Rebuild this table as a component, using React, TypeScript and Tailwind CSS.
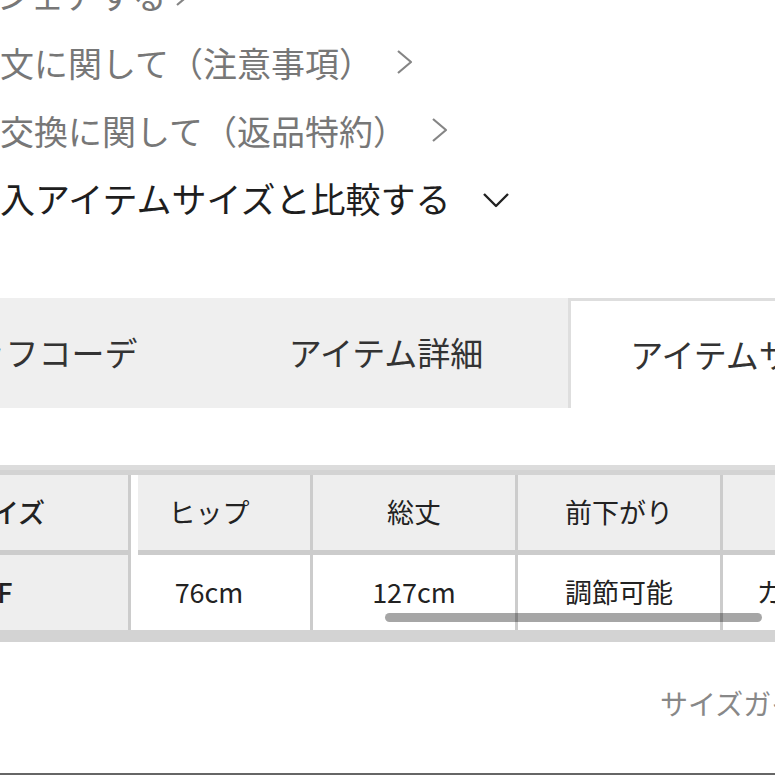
import React from "react";

const links = [
  { text: "アイテムをシェアする", shift: "-ml-[170px]", gap: "ml-[8px]" },
  { text: "ご注文に関して（注意事項）", shift: "-ml-[68px]", gap: "ml-[23px]" },
  { text: "返品・交換に関して（返品特約）", shift: "-ml-[102px]", gap: "ml-[24px]" },
];

const tabs = [
  { label: "スタッフコーデ", active: false },
  { label: "アイテム詳細", active: false },
  { label: "アイテムサイズ", active: true },
];

const columns = [
  { head: "ヒップ", value: "76cm" },
  { head: "総丈", value: "127cm" },
  { head: "前下がり", value: "調節可能" },
  { head: "素材", value: "カットソー" },
];

const ChevronRight = () => (
  <svg width="18" height="26" viewBox="0 0 18 26" fill="none">
    <path d="M2 2 L15 13 L2 24" stroke="#858585" strokeWidth="2.2" strokeLinejoin="round" />
  </svg>
);

const ChevronDown = () => (
  <svg width="28" height="17" viewBox="0 0 28 17" fill="none">
    <path d="M2 2 L14 14 L26 2" stroke="#222" strokeWidth="2.4" strokeLinejoin="round" />
  </svg>
);

export default function App() {
  return (
    <div className="w-[775px] h-[775px] overflow-hidden bg-white font-['Noto_Sans_CJK_JP','Noto_Sans',sans-serif]">
      {/* link list */}
      <div className="-mt-[40px]">
        {links.map((l) => (
          <div
            key={l.text}
            className={`flex items-center h-[68px] whitespace-nowrap text-[34px] text-[#777] ${l.shift}`}
          >
            <span>{l.text}</span>
            <span className={`flex items-center ${l.gap}`}>
              <ChevronRight />
            </span>
          </div>
        ))}
        <div className="flex items-center h-[68px] whitespace-nowrap text-[35px] text-[#1e1e1e] -ml-[35px]">
          <span>購入アイテムサイズと比較する</span>
          <span className="ml-[32px] flex items-center mt-[4px]">
            <ChevronDown />
          </span>
        </div>
      </div>

      {/* tabs */}
      <div className="mt-[66px] flex h-[110px] -ml-[160px]">
        {tabs.map((t) => (
          <div
            key={t.label}
            className={`w-[364px] shrink-0 flex items-center justify-center whitespace-nowrap text-[33px] text-[#333] ${
              t.active ? "bg-white border-t-[3px] border-l-[3px] border-[#dedede] pr-[16px]" : "bg-[#efefef]"
            }`}
          >
            {t.label}
          </div>
        ))}
      </div>

      {/* size table */}
      <div className="mt-[57px] relative h-[177px] overflow-hidden bg-[#d3d3d3] border-t-[5px] border-[#dcdcdc] pt-[5px] pb-[12px]">
        <div className="flex gap-[3px] ml-[108px] bg-[#cccccc] w-max">
          {columns.map((c) => (
            <div key={c.head} className="w-[202px] shrink-0 flex flex-col text-[27px] text-[#222]">
              <div className="h-[75px] bg-[#eeeeee] flex items-center justify-center whitespace-nowrap">
                {c.head}
              </div>
              <div className="h-[5px] bg-[#cccccc]" />
              <div className="h-[75px] bg-white flex items-center justify-center whitespace-nowrap">
                {c.value}
              </div>
            </div>
          ))}
        </div>

        {/* sticky first column */}
        <div className="absolute left-0 top-[5px] bottom-[12px] flex">
          <div className="w-[128px] flex flex-col bg-[#cccccc] text-[27px] text-[#222]">
            <div className="h-[75px] bg-[#eeeeee] overflow-hidden flex items-center">
              <div className="w-[258px] shrink-0 -ml-[124px] text-center font-medium whitespace-nowrap">サイズ</div>
            </div>
            <div className="h-[5px]" />
            <div className="h-[75px] bg-[#eeeeee] overflow-hidden flex items-center">
              <div className="w-[258px] shrink-0 -ml-[124px] text-center font-medium whitespace-nowrap">F</div>
            </div>
          </div>
          <div className="w-[3px] bg-[#cccccc]" />
          <div className="w-[7px] bg-white" />
        </div>

        {/* overlay scrollbar */}
        <div className="absolute left-[385px] top-[143px] w-[377px] h-[9px] rounded-full bg-black/35" />
      </div>

      {/* footer note */}
      <div className="h-[131px] flex items-center pb-[10px] pl-[660px] whitespace-nowrap text-[28px] text-[#888]">
        サイズガイド
      </div>
      <div className="h-[2px] bg-[#666]" />
    </div>
  );
}
